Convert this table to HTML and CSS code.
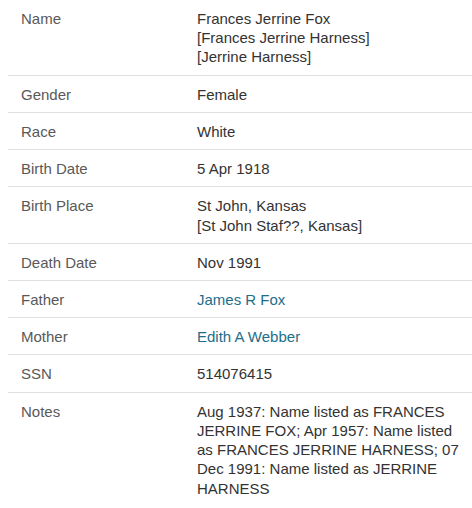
FILE: index.html
```html
<!DOCTYPE html>
<html>
<head>
<meta charset="utf-8">
<link rel="stylesheet" href="styles.css">
</head>
<body>
<div class="record">
  <div class="row"><div class="label">Name</div><div class="value">Frances Jerrine Fox<br>[Frances Jerrine Harness]<br>[Jerrine Harness]</div></div>
  <div class="row"><div class="label">Gender</div><div class="value">Female</div></div>
  <div class="row"><div class="label">Race</div><div class="value">White</div></div>
  <div class="row"><div class="label">Birth Date</div><div class="value">5 Apr 1918</div></div>
  <div class="row"><div class="label">Birth Place</div><div class="value">St John, Kansas<br>[St John Staf??, Kansas]</div></div>
  <div class="row"><div class="label">Death Date</div><div class="value">Nov 1991</div></div>
  <div class="row"><div class="label">Father</div><div class="value"><a class="link" href="#">James R Fox</a></div></div>
  <div class="row"><div class="label">Mother</div><div class="value"><a class="link" href="#">Edith A Webber</a></div></div>
  <div class="row"><div class="label">SSN</div><div class="value">514076415</div></div>
  <div class="row last"><div class="label">Notes</div><div class="value">Aug 1937: Name listed as FRANCES JERRINE FOX; Apr 1957: Name listed as FRANCES JERRINE HARNESS; 07 Dec 1991: Name listed as JERRINE HARNESS</div></div>
</div>
</body>
</html>
```

FILE: styles.css
```css
html, body {
  margin: 0;
  padding: 0;
  background: #fff;
}
body {
  padding: 0 0 0 8px;
  font-family: "Liberation Sans", Arial, sans-serif;
  font-size: 15px;
  line-height: 19.22px;
  color: #333;
}
.record {
  width: 464px;
}
.row {
  display: grid;
  grid-template-columns: 189px 1fr;
  padding: 9px 0 8px 0;
  border-bottom: 1px solid #e0e0e0;
}
.row.last {
  border-bottom: none;
}
.label {
  padding-left: 13px;
  color: #595959;
}
.value {
  color: #333;
  padding-right: 8px;
}
.link {
  color: #1e6e8a;
  text-decoration: none;
}
```
